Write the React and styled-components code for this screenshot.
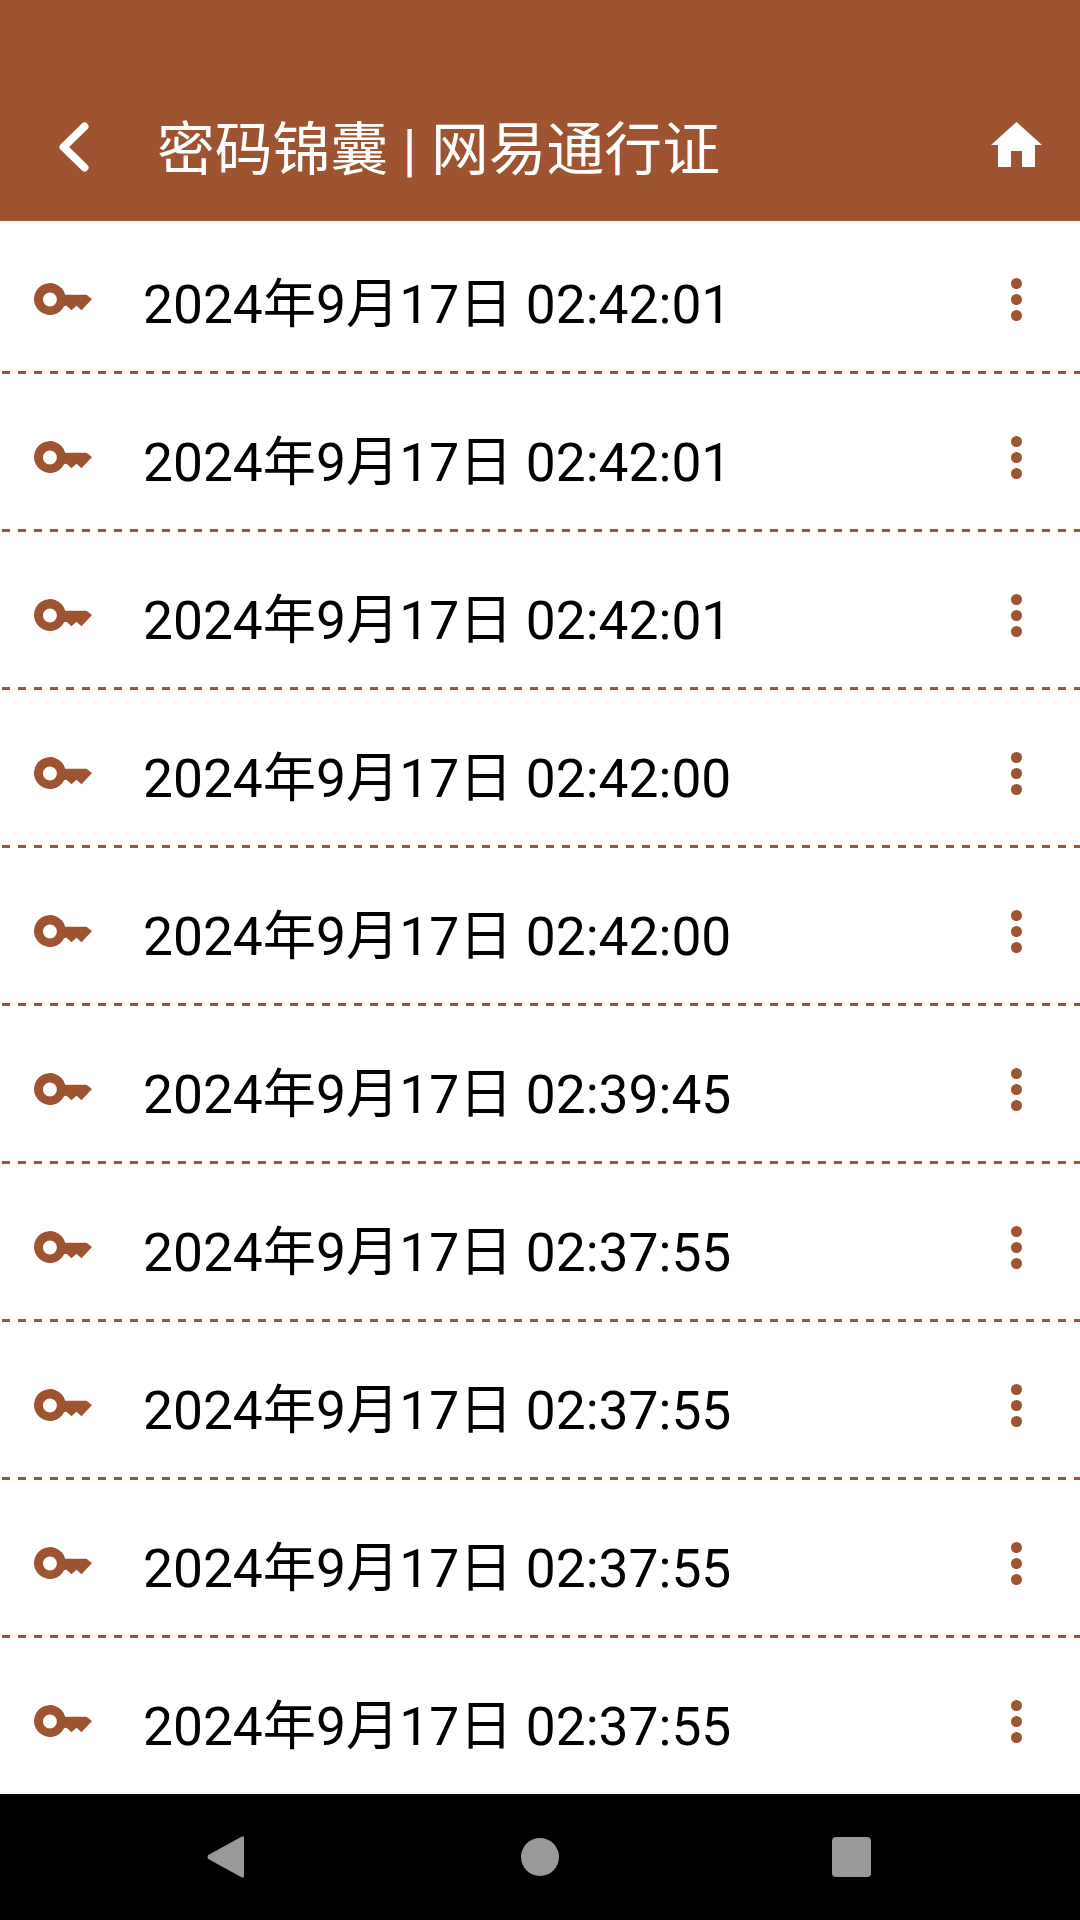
import React from "react";
import styled, { createGlobalStyle } from "styled-components";

const BRAND = "#9e5430";

const ENTRIES = [
  "2024年9月17日 02:42:01",
  "2024年9月17日 02:42:01",
  "2024年9月17日 02:42:01",
  "2024年9月17日 02:42:00",
  "2024年9月17日 02:42:00",
  "2024年9月17日 02:39:45",
  "2024年9月17日 02:37:55",
  "2024年9月17日 02:37:55",
  "2024年9月17日 02:37:55",
  "2024年9月17日 02:37:55",
];

export default function App() {
  return (
    <Page>
      <GlobalStyle />
      <Header>
        <BackIcon viewBox="0 0 30 50">
          <path d="M25.5 4.5 L4.5 25 L25.5 45.5" />
        </BackIcon>
        <Title>密码锦囊 | 网易通行证</Title>
        <HomeIcon viewBox="0 0 51 45">
          <path d="M25.5 0 L51 23 L44 23 L44 45 L31 45 L31 29 L20 29 L20 45 L7 45 L7 23 L0 23 Z" />
        </HomeIcon>
      </Header>
      <List>
        {ENTRIES.map((entry, i) => (
          <Row key={i} $last={i === ENTRIES.length - 1}>
            <KeyIcon viewBox="0 0 58.300 32">
              <path
                fillRule="evenodd"
                d="M31.400 11.700 L52.700 11.700 L58.300 16 L47.700 27.300 L42.700 22.700 L37.700 27.300 L32.700 22.700 L30.400 23 A16 16 0 1 1 31.400 11.700 Z M16 9.500 A7 7 0 1 0 16 23.500 A7 7 0 1 0 16 9.500 Z"
              />
            </KeyIcon>
            <EntryDate>{entry}</EntryDate>
            <MoreButton>
              <Dot />
              <Dot />
              <Dot />
            </MoreButton>
          </Row>
        ))}
      </List>
      <NavBar>
        <NavIcon viewBox="0 0 37 42" $w={37} $h={42} $after={277}>
          <path d="M34.500 0.800 Q37 -0.800 37 2.500 L37 39.500 Q37 42.800 34.500 41.200 L1.200 23 Q0 21 1.200 19 Z" />
        </NavIcon>
        <NavIcon viewBox="0 0 38 38" $w={38} $h={38} $after={273}>
          <circle cx="19" cy="19" r="19" />
        </NavIcon>
        <NavIcon viewBox="0 0 39 40" $w={39} $h={40}>
          <rect width="39" height="40" rx="4" />
        </NavIcon>
      </NavBar>
    </Page>
  );
}

// Styled Components
const GlobalStyle = createGlobalStyle`
  html, body {
    margin: 0;
    padding: 0;
    background: #fff;
  }
`;

const Page = styled.div`
  width: 1080px;
  height: 1920px;
  display: flex;
  flex-direction: column;
  overflow: hidden;
  font-family: Roboto, "Noto Sans CJK SC", sans-serif;
`;

const Header = styled.header`
  height: 221px;
  box-sizing: border-box;
  padding: 74px 38px 0 59px;
  display: flex;
  align-items: center;
  background-color: ${BRAND};
`;

const BackIcon = styled.svg`
  width: 30px;
  height: 50px;
  margin-bottom: 2px;
  fill: none;
  stroke: #fff;
  stroke-width: 8px;
  stroke-linecap: round;
  stroke-linejoin: round;
`;

const Title = styled.h1`
  margin: 4px 0 0 68px;
  flex: 1;
  font-size: 57.8px;
  font-weight: 400;
  line-height: 74px;
  color: #fff;
  white-space: nowrap;
`;

const HomeIcon = styled.svg`
  width: 51px;
  height: 45px;
  margin-bottom: 6px;
  fill: #fff;
`;

const List = styled.main`
  flex: 1;
  min-height: 0;
  display: flex;
  flex-direction: column;
  row-gap: 5px;
  overflow: hidden;
  background-color: #fff;
`;

const Row = styled.div`
  flex: none;
  height: 153px;
  box-sizing: border-box;
  padding: 4px 58px 0 34px;
  display: flex;
  align-items: center;
  background-image: ${(p) =>
    p.$last
      ? "none"
      : `repeating-linear-gradient(to right, transparent 0 2px, ${BRAND} 2px 10px, transparent 10px 16px)`};
  background-size: 100% 3px;
  background-position: 0 100%;
  background-repeat: no-repeat;
`;

const KeyIcon = styled.svg`
  flex: none;
  width: 58px;
  height: 32px;
  margin-bottom: 2px;
  fill: ${BRAND};
`;

const EntryDate = styled.div`
  flex: 1;
  margin: 10px 0 0 51px;
  font-size: 53.3px;
  line-height: 70px;
  color: #000;
  white-space: nowrap;
`;

const MoreButton = styled.div`
  display: flex;
  flex-direction: column;
  row-gap: 5px;
`;

const Dot = styled.span`
  display: block;
  width: 11px;
  height: 11px;
  border-radius: 50%;
  background-color: ${BRAND};
`;

const NavBar = styled.nav`
  height: 126px;
  flex: none;
  box-sizing: border-box;
  padding: 0 0 0 207px;
  display: flex;
  align-items: center;
  background-color: #000;
`;

const NavIcon = styled.svg`
  width: ${(p) => p.$w}px;
  height: ${(p) => p.$h}px;
  margin-right: ${(p) => p.$after || 0}px;
  fill: #999;
`;
